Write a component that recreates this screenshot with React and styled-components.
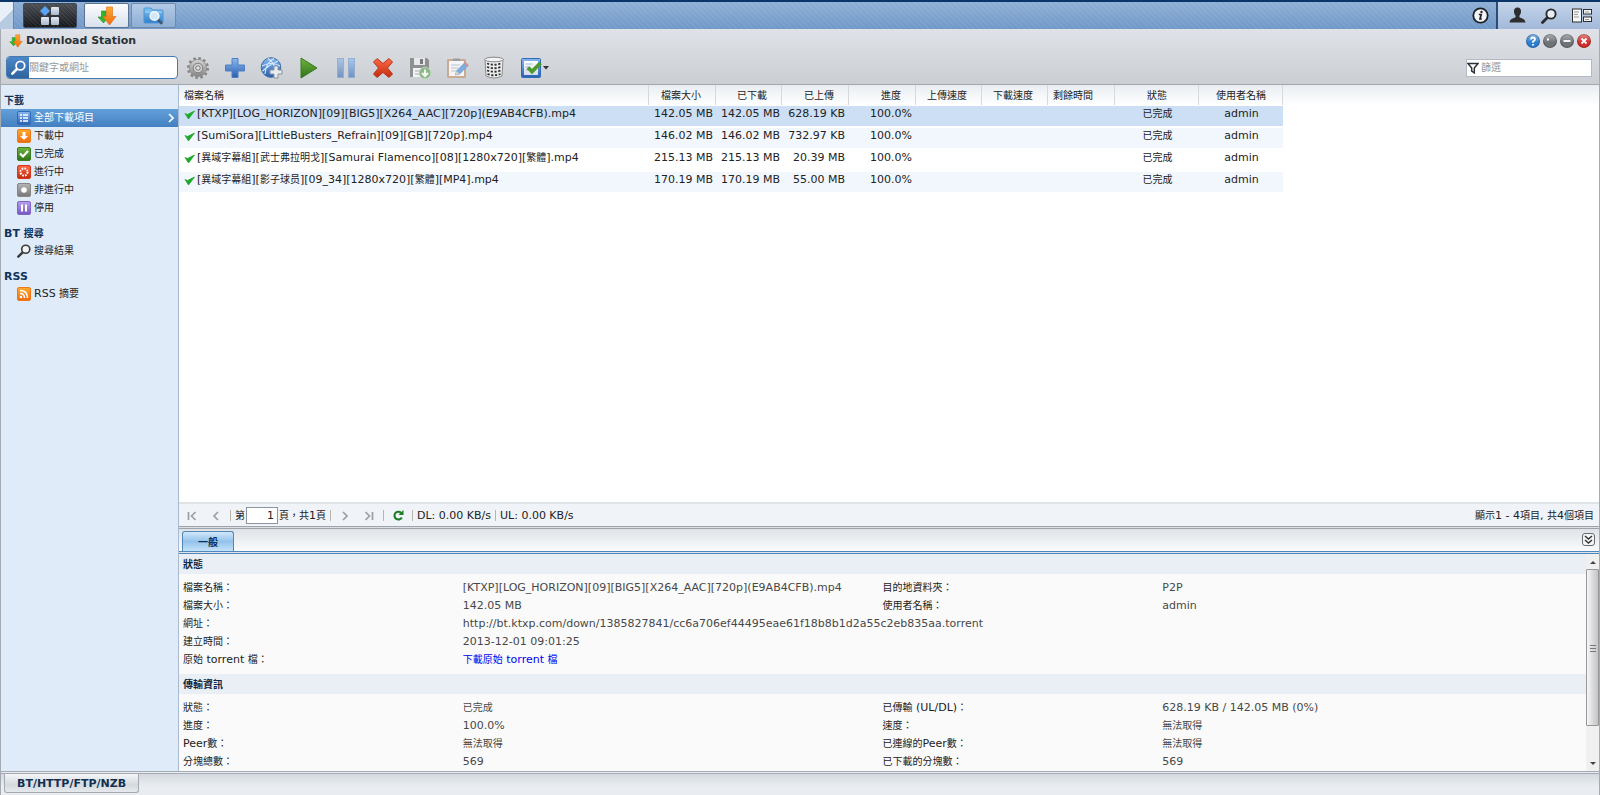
import { useState } from "react";
import styled, { createGlobalStyle, css } from "styled-components";

const CJK = /([\u2e80-\u9fff\uff00-\uffef]+)/;

const Mixed = ({ children }) =>
  String(children)
    .split(CJK)
    .map((part, i) => (i % 2 ? <Han key={i}>{part}</Han> : part));

const columns = [
  { key: "name", title: "檔案名稱", width: 470, align: "left" },
  { key: "size", title: "檔案大小", width: 67, align: "right" },
  { key: "down", title: "已下載", width: 66, align: "right" },
  { key: "up", title: "已上傳", width: 67, align: "right" },
  { key: "progress", title: "進度", width: 67, align: "right" },
  { key: "upSpeed", title: "上傳速度", width: 66, align: "right" },
  { key: "downSpeed", title: "下載速度", width: 66, align: "right" },
  { key: "remain", title: "剩餘時間", width: 67, align: "left" },
  { key: "status", title: "狀態", width: 84, align: "center" },
  { key: "user", title: "使用者名稱", width: 84, align: "center" },
];

const tasks = [
  {
    name: "[KTXP][LOG_HORIZON][09][BIG5][X264_AAC][720p](E9AB4CFB).mp4",
    size: "142.05 MB",
    up: "628.19 KB",
  },
  {
    name: "[SumiSora][LittleBusters_Refrain][09][GB][720p].mp4",
    size: "146.02 MB",
    up: "732.97 KB",
  },
  {
    name: "[異域字幕組][武士弗拉明戈][Samurai Flamenco][08][1280x720][繁體].mp4",
    size: "215.13 MB",
    up: "20.39 MB",
  },
  {
    name: "[異域字幕組][影子球员][09_34][1280x720][繁體][MP4].mp4",
    size: "170.19 MB",
    up: "55.00 MB",
  },
].map((task) => ({
  ...task,
  down: task.size,
  progress: "100.0%",
  status: "已完成",
  user: "admin",
}));

const sections = [
  {
    title: "狀態",
    rows: [
      ["檔案名稱：", tasks[0].name, "目的地資料夾：", "P2P"],
      ["檔案大小：", "142.05 MB", "使用者名稱：", "admin"],
      [
        "網址：",
        "http://bt.ktxp.com/down/1385827841/cc6a706ef44495eae61f18b8b1d2a55c2eb835aa.torrent",
      ],
      ["建立時間：", "2013-12-01 09:01:25"],
      ["原始 torrent 檔：", "下載原始 torrent 檔"],
    ],
  },
  {
    title: "傳輸資訊",
    rows: [
      ["狀態：", "已完成", "已傳輸 (UL/DL)：", "628.19 KB / 142.05 MB (0%)"],
      ["進度：", "100.0%", "速度：", "無法取得"],
      ["Peer數：", "無法取得", "已連線的Peer數：", "無法取得"],
      ["分塊總數：", "569", "已下載的分塊數：", "569"],
    ],
  },
];

/* ---------- icons ---------- */

const Svg = ({ w = 24, h = w, box = `0 0 ${w} ${h}`, children }) => (
  <svg width={w} height={h} viewBox={box} fill="none" aria-hidden="true">
    {children}
  </svg>
);

const Gradients = () => (
  <HiddenSvg aria-hidden="true">
    <defs>
      {[
        ["gBlue", "#8ab8ee", "#2a5fb0"],
        ["gGreen", "#6fb33f", "#2f7418"],
        ["gOrange", "#ffab2e", "#f06a10"],
        ["gRed", "#ff6a45", "#c02a10"],
        ["gGray", "#b5b5b5", "#777777"],
        ["gPurple", "#b5a0ea", "#7657c4"],
        ["gSteel", "#d5d5d5", "#858585"],
        ["gSheet", "#ffffff", "#d3dcea"],
        ["gTile", "#e3eaf4", "#a9b7c9"],
        ["gFolder", "#83c4f3", "#2f7fcb"],
      ].map(([id, from, to]) => (
        <linearGradient key={id} id={id} x1="0" y1="0" x2="0" y2="1">
          <stop offset="0" stopColor={from} />
          <stop offset="1" stopColor={to} />
        </linearGradient>
      ))}
    </defs>
  </HiddenSvg>
);

const ArrowsIcon = ({ size }) => (
  <Svg w={size} box="0 0 20 20">
    <path d="M4.500 5h4.500v6h2.500L6.500 17 1 11h3.500z" fill="#35b52c" stroke="#1f8c1c" strokeWidth="0.600" />
    <path d="M9.500 1h6v9.500h3.500L12.500 19 6 10.500h3.500z" fill="url(#gOrange)" stroke="#e06a12" strokeWidth="0.600" />
  </Svg>
);

const MenuTilesIcon = () => (
  <Svg w={20}>
    <path d="M5 0l5 5-5 5-5-5z" fill="#5aa3f5" />
    <rect x="11" y="1" width="8" height="8" rx="1" fill="url(#gTile)" />
    <rect x="1" y="11" width="8" height="8" rx="1" fill="url(#gTile)" />
    <rect x="11" y="11" width="8" height="8" rx="1" fill="url(#gTile)" />
  </Svg>
);

const FolderIcon = () => (
  <Svg w={21} h={20}>
    <path d="M1 3q0-1 1-1h6l2 2h9q1 0 1 1v11q0 1-1 1H2q-1 0-1-1z" fill="url(#gFolder)" stroke="#4f95d2" />
    <path d="M2 6h17" stroke="#a9dbfa" />
    <path d="M14.500 13l4.500 5" stroke="#41556c" strokeWidth="2.400" />
    <circle cx="11.500" cy="10" r="4.300" fill="#cfe8fb" stroke="#f5f9fd" strokeWidth="1.600" />
  </Svg>
);

const InfoIcon = () => (
  <Svg w={17}>
    <circle cx="8.500" cy="8.500" r="7.200" fill="#f3f5f7" stroke="#1c2126" strokeWidth="1.800" />
    <circle cx="9.500" cy="4.900" r="1.200" fill="#1c2126" />
    <path d="M6.800 7.500h2.400L8 12h1.800" stroke="#1c2126" strokeWidth="1.700" />
  </Svg>
);

const UserIcon = () => (
  <Svg w={17}>
    <path d="M8.500 0.500c2.600 0 3.700 1.900 3.500 4.300-.1 1.700-.8 3-1.600 3.900v1.600c1.500 1 5.600 1.200 6 5.200H.6c.4-4 4.500-4.200 6-5.200V8.700C5.800 7.800 5.100 6.500 5 4.800 4.800 2.400 5.900.5 8.500.5z" fill="#2e2e2e" />
  </Svg>
);

const LensIcon = ({ size = 16, color = "#2b2b2b", glass = "#e8edf4" }) => (
  <Svg w={size} box="0 0 16 16">
    <path d="M6.200 9.800L1.500 14.500" stroke={color} strokeWidth="2.800" strokeLinecap="round" />
    <circle cx="10" cy="6" r="4.600" fill={glass} stroke={color} strokeWidth="1.900" />
  </Svg>
);

const WidgetIcon = () => (
  <Svg w={20} h={15}>
    <rect x="0.500" y="1" width="9" height="13" fill="#f4f5f7" stroke="#2e2e2e" />
    <path d="M2 4h5M2 6.500h4M2 9h5" stroke="#999" />
    <rect x="11.500" y="1.500" width="8" height="4.500" fill="#f4f5f7" stroke="#2e2e2e" />
    <rect x="11.500" y="9" width="8" height="4.500" fill="#f4f5f7" stroke="#2e2e2e" />
    <path d="M13 4h4M13 11.500h4" stroke="#999" />
  </Svg>
);

const GearIcon = () => (
  <Svg>
    <circle cx="12" cy="12" r="9.700" stroke="#858585" strokeWidth="2.600" strokeDasharray="2.600 2.480" />
    <circle cx="12" cy="12" r="8.600" fill="url(#gSteel)" stroke="#8a8a8a" strokeWidth="0.800" />
    <circle cx="12" cy="12" r="4.800" fill="#d0d0d0" stroke="#7f7f7f" />
    <circle cx="12" cy="12" r="2.200" fill="#e3e6e9" stroke="#777" />
  </Svg>
);

const PlusIcon = () => (
  <Svg>
    <path d="M9 2.500h6V9h6.500v6H15v6.500H9V15H2.500V9H9z" fill="url(#gBlue)" stroke="#4d80c4" />
  </Svg>
);

const GlobeIcon = () => (
  <Svg>
    <circle cx="11" cy="11.500" r="9.800" fill="url(#gBlue)" stroke="#3e6ba5" />
    <path d="M2 10q9-5 18 0M5 18Q6 6 14 2.500M8 2.500q8 5 8 17M2.500 15Q9 9 18 5" stroke="#d5ebff" strokeWidth="1.100" />
    <path d="M14 10h4v4h4v4h-4v4h-4v-4h-4v-4h4z" fill="#e9ecef" stroke="#8a949e" />
  </Svg>
);

const PlayIcon = () => (
  <Svg>
    <path d="M4 2l16 10L4 22z" fill="url(#gGreen)" stroke="#3a7b20" />
  </Svg>
);

const PauseIcon = () => (
  <Svg>
    <g fill="url(#gBlue)" stroke="#5f92d4" opacity="0.550">
      <rect x="3.500" y="2.500" width="6" height="19" />
      <rect x="14.500" y="2.500" width="6" height="19" />
    </g>
  </Svg>
);

const DeleteIcon = () => (
  <Svg>
    <path d="M6 2.500l6 5 6-5 3.500 3.500-5 6 5 6-3.500 3.500-6-5-6 5L2.500 18l5-6-5-6z" fill="url(#gRed)" stroke="#b8371c" />
  </Svg>
);

const SaveIcon = () => (
  <Svg>
    <path d="M2 2h17l2 2v17H2z" fill="#8f9092" />
    <rect x="6" y="2" width="11" height="7" fill="#e6e8ea" />
    <rect x="12" y="3" width="3" height="5" fill="#77797b" />
    <rect x="5" y="12" width="13" height="9" fill="#f2f3f4" />
    <path d="M7 15h8M7 18h6" stroke="#aaa" />
    <circle cx="17" cy="17" r="5.800" fill="#8fb58a" stroke="#b9d6b5" />
    <path d="M17 13.500v6M14 17l3 3 3-3" stroke="#f4fbf3" strokeWidth="2" />
  </Svg>
);

const EditIcon = () => (
  <Svg>
    <rect x="2" y="3" width="19" height="19" rx="1" fill="#c9ab94" />
    <rect x="4" y="5" width="15" height="15" fill="#f3f5f8" />
    <path d="M8 5V2.500h7V5z" fill="#9b9fa4" />
    <path d="M6 9h9M6 12h7M6 15h5" stroke="#bac2cc" />
    <path d="M10.500 19l1-4 8.500-8.500 3 3L14.500 18z" fill="#7daee2" stroke="#5f8fc4" strokeWidth="0.700" />
    <path d="M19 7.500l1.500-1.500 3 3-1.500 1.500z" fill="#e58d85" />
    <path d="M10.500 19l1-4 3 3z" fill="#e4d3bd" />
  </Svg>
);

const BinIcon = () => (
  <Svg>
    <path d="M3 3.500h18L20 20q-8 4-16 0z" fill="#eceded" stroke="#8b8b8b" />
    <path d="M5 7.500q7 2.500 14 0M5 11q7 2.500 14 0M5 14.500q7 2.500 14 0M5.500 18q6.500 2.500 13 0" stroke="#2d2d2d" strokeWidth="1.800" strokeDasharray="2.200 1.600" />
    <ellipse cx="12" cy="3.500" rx="9.300" ry="2.300" fill="#f3f4f5" stroke="#858585" />
  </Svg>
);

const SelectIcon = () => (
  <Svg>
    <rect x="2.500" y="2.500" width="19" height="19" rx="1" fill="url(#gBlue)" stroke="#2f6cb8" />
    <rect x="5" y="5" width="14" height="14" fill="url(#gSheet)" />
    <path d="M6.500 8h7M6.500 11h4M6.500 14h3" stroke="#9db6d2" />
    <path d="M9 11.500l4 4 8.500-8.500" stroke="#4d9a2c" strokeWidth="3.800" />
  </Svg>
);

const NavTile = ({ fill, stroke, children }) => (
  <Svg w={14}>
    <rect x="0.500" y="0.500" width="13" height="13" rx="1.500" fill={`url(#${fill})`} stroke={stroke} />
    {children}
  </Svg>
);

const navIcons = {
  all: (
    <NavTile fill="gBlue" stroke="#2f6ab8">
      <path d="M3 4h2M3 7h2M3 10h2M6 4h5M6 7h5M6 10h5" stroke="#fff" strokeWidth="1.300" />
    </NavTile>
  ),
  downloading: (
    <NavTile fill="gOrange" stroke="#ea7c1c">
      <path d="M5.500 3h3v4H11l-4 4-4-4h2.500z" fill="#fff" />
    </NavTile>
  ),
  done: (
    <NavTile fill="gGreen" stroke="#3a7d25">
      <path d="M3 6.500l3 3L11 4" stroke="#fff" strokeWidth="2.200" />
    </NavTile>
  ),
  active: (
    <NavTile fill="gRed" stroke="#d4371d">
      <circle cx="7" cy="7" r="3.600" stroke="#fff" strokeWidth="1.900" strokeDasharray="1.700 1.120" />
    </NavTile>
  ),
  inactive: (
    <NavTile fill="gGray" stroke="#858585">
      <circle cx="7" cy="7" r="2.800" fill="#fff" />
    </NavTile>
  ),
  stopped: (
    <NavTile fill="gPurple" stroke="#7f64c6">
      <path d="M5 3.500v7M9 3.500v7" stroke="#fff" strokeWidth="2" />
    </NavTile>
  ),
  search: <LensIcon size={14} color="#3c3c3c" glass="#f1f2f3" />,
  rss: (
    <NavTile fill="gOrange" stroke="#ea7c1c">
      <circle cx="4" cy="10" r="1.300" fill="#fff" />
      <path d="M3 6.500q4.500 0 4.500 4.500M3 3.500q7.500 0 7.500 7.500" stroke="#fff" strokeWidth="1.500" />
    </NavTile>
  ),
};

const TickIcon = () => (
  <Svg w={12} h={10}>
    <path d="M1 3.500l2.500 1L10.500 1 4.500 9z" fill="#1ea82a" stroke="#1ea82a" strokeWidth="0.800" />
  </Svg>
);

const FilterIcon = () => (
  <Svg w={12}>
    <path d="M1 1.500h10L7.300 6v4.800L4.700 9V6z" stroke="#2e3338" strokeWidth="1.500" />
  </Svg>
);

const pageIcons = {
  first: "M1.500 1v8M8.500 1l-4 4 4 4",
  prev: "M7 1L3 5l4 4",
  next: "M3 1l4 4-4 4",
  last: "M1.500 1l4 4-4 4M8.500 1v8",
};

const controlIcons = [
  {
    label: "說明",
    color: "#2f7fd0",
    path: "M5 5.500Q5 3.500 7 3.500t2 1.800Q9 6.500 7 7.500v1.300M7 10v1.500",
  },
  { label: "最小化", color: "#6e7377", path: "M4 5.500h2" },
  { label: "還原", color: "#6e7377", path: "M3.500 7h7" },
  { label: "關閉", color: "#cf2f2b", path: "M4.500 4.500l5 5M9.500 4.500l-5 5" },
];

const tools = [
  ["設定", <GearIcon />],
  ["新增", <PlusIcon />],
  ["新增網址", <GlobeIcon />],
  ["開始", <PlayIcon />],
  ["暫停", <PauseIcon />],
  ["刪除", <DeleteIcon />],
  ["儲存", <SaveIcon />],
  ["編輯", <EditIcon />],
  ["清除", <BinIcon />],
];

const nav = [
  {
    title: "下載",
    items: [
      ["all", "全部下載項目"],
      ["downloading", "下載中"],
      ["done", "已完成"],
      ["active", "進行中"],
      ["inactive", "非進行中"],
      ["stopped", "停用"],
    ],
  },
  { title: "BT 搜尋", items: [["search", "搜尋結果"]] },
  { title: "RSS", items: [["rss", "RSS 摘要"]] },
];

/* ---------- parts ---------- */

const PageButton = ({ kind, label }) => (
  <PagerButton aria-label={label} disabled>
    <Svg w={10}>
      <path d={pageIcons[kind]} stroke="#9a9fa5" strokeWidth="1.700" />
    </Svg>
  </PagerButton>
);

const Sidebar = ({ current, onSelect }) => (
  <Side>
    {nav.map(({ title, items }) => (
      <NavGroup key={title}>
        <NavTitle>
          <Mixed>{title}</Mixed>
        </NavTitle>
        {items.map(([id, label]) => (
          <NavItem key={id} $active={id === current} onClick={() => onSelect(id)}>
            {navIcons[id]}
            <NavLabel>
              <Mixed>{label}</Mixed>
            </NavLabel>
            {id === current && (
              <Svg w={6} h={10}>
                <path d="M1 1l4 4-4 4" stroke="#fff" strokeWidth="1.600" />
              </Svg>
            )}
          </NavItem>
        ))}
      </NavGroup>
    ))}
  </Side>
);

const TaskTable = ({ selected, onSelect }) => (
  <ListArea>
    <Table>
      <colgroup>
        {columns.map(({ key, width }) => (
          <Col key={key} $width={width} />
        ))}
      </colgroup>
      <thead>
        <tr>
          {columns.map(({ key, title, align }) => (
            <Th key={key} $align={align}>
              <Mixed>{title}</Mixed>
            </Th>
          ))}
        </tr>
      </thead>
      <tbody>
        {tasks.map((task, i) => (
          <Tr key={task.name} $selected={i === selected} onClick={() => onSelect(i)}>
            {columns.map(({ key, align }) => (
              <Td key={key} $align={align}>
                {key === "name" && <TickIcon />}
                <Mixed>{task[key] || ""}</Mixed>
              </Td>
            ))}
          </Tr>
        ))}
      </tbody>
    </Table>
  </ListArea>
);

const Details = () => (
  <DetailArea>
    <DetailBody>
      {sections.map(({ title, rows }) => (
        <section key={title}>
          <SectionTitle>
            <Mixed>{title}</Mixed>
          </SectionTitle>
          <SectionRows>
            {rows.map(([label, value, label2, value2]) => (
              <DetailRow key={label}>
                <dt>
                  <Mixed>{label}</Mixed>
                </dt>
                <dd>
                  {value.startsWith("下載原始") ? (
                    <TorrentLink href="#torrent">
                      <Mixed>{value}</Mixed>
                    </TorrentLink>
                  ) : (
                    <Mixed>{value}</Mixed>
                  )}
                </dd>
                {label2 && (
                  <>
                    <dt>
                      <Mixed>{label2}</Mixed>
                    </dt>
                    <dd>
                      <Mixed>{value2}</Mixed>
                    </dd>
                  </>
                )}
              </DetailRow>
            ))}
          </SectionRows>
        </section>
      ))}
    </DetailBody>
    <ScrollBar>
      <ScrollArrow aria-label="向上">
        <Svg w={6} h={4}>
          <path d="M0 4l3-3 3 3z" fill="#444" />
        </Svg>
      </ScrollArrow>
      <ScrollTrack>
        <ScrollThumb>
          <Svg w={6} h={8}>
            <path d="M0 1.500h6M0 4.500h6M0 7.500h6" stroke="#777" />
          </Svg>
        </ScrollThumb>
      </ScrollTrack>
      <ScrollArrow aria-label="向下">
        <Svg w={6} h={4}>
          <path d="M0 0l3 3 3-3z" fill="#444" />
        </Svg>
      </ScrollArrow>
    </ScrollBar>
  </DetailArea>
);

const App = () => {
  const [current, setCurrent] = useState("all");
  const [selected, setSelected] = useState(0);

  return (
    <>
      <GlobalStyle />
      <Gradients />
      <Desktop>
        <TaskBar>
          <ShowDesktop aria-label="顯示桌面" />
          <MainMenu aria-label="主選單">
            <MenuTilesIcon />
          </MainMenu>
          <TaskButton aria-label="Download Station" $active>
            <ArrowsIcon size={20} />
          </TaskButton>
          <TaskButton aria-label="File Station">
            <FolderIcon />
          </TaskButton>
          <InfoButton aria-label="資訊">
            <InfoIcon />
          </InfoButton>
          <Tray>
            <IconButton aria-label="使用者">
              <UserIcon />
            </IconButton>
            <IconButton aria-label="搜尋">
              <LensIcon />
            </IconButton>
            <IconButton aria-label="小工具">
              <WidgetIcon />
            </IconButton>
          </Tray>
        </TaskBar>

        <Window>
          <WindowHead>
            <TitleBar>
              <ArrowsIcon size={14} />
              <Title>Download Station</Title>
              {controlIcons.map(({ label, color, path }) => (
                <Control key={label} aria-label={label} $color={color}>
                  <Svg w={14}>
                    <path d={path} stroke="#fff" strokeWidth="1.800" />
                  </Svg>
                </Control>
              ))}
            </TitleBar>
            <ToolBar>
              <SearchBox>
                <SearchButton aria-label="搜尋">
                  <LensIcon size={15} color="#fff" glass="#3f78b8" />
                </SearchButton>
                <SearchInput aria-label="關鍵字或網址" placeholder="關鍵字或網址" />
              </SearchBox>
              <Tools>
                {tools.map(([label, icon]) => (
                  <IconButton key={label} aria-label={label}>
                    {icon}
                  </IconButton>
                ))}
                <IconButton aria-label="選擇">
                  <SelectIcon />
                  <Svg w={6} h={4}>
                    <path d="M0 0h6L3 3.500z" fill="#333" />
                  </Svg>
                </IconButton>
              </Tools>
              <FilterBox>
                <FilterIcon />
                <FilterInput aria-label="篩選" placeholder="篩選" />
              </FilterBox>
            </ToolBar>
          </WindowHead>

          <Content>
            <Sidebar current={current} onSelect={setCurrent} />
            <Main>
              <TaskTable selected={selected} onSelect={setSelected} />
              <Pager>
                <PageButton kind="first" label="第一頁" />
                <PageButton kind="prev" label="上一頁" />
                <Divider />
                <PageLabel>
                  <Mixed>第</Mixed>
                  <PageInput aria-label="頁碼" defaultValue="1" />
                  <Mixed>頁，共1頁</Mixed>
                </PageLabel>
                <Divider />
                <PageButton kind="next" label="下一頁" />
                <PageButton kind="last" label="最後一頁" />
                <Divider />
                <PagerButton aria-label="重新整理">
                  <Svg w={11}>
                    <path d="M8.800 7.500A3.900 3.900 0 1 1 8 2.700" stroke="#1c7c24" strokeWidth="2.100" />
                    <path d="M10.500 0v5h-5z" fill="#1c7c24" />
                  </Svg>
                </PagerButton>
                <Divider />
                <span>DL: 0.00 KB/s</span>
                <Divider />
                <span>UL: 0.00 KB/s</span>
                <PageTotal>
                  <Mixed>顯示1 - 4項目, 共4個項目</Mixed>
                </PageTotal>
              </Pager>
              <Splitter />
              <TabStrip>
                <Tab>
                  <Mixed>一般</Mixed>
                </Tab>
                <CollapseButton aria-label="收合">
                  <Svg w={9}>
                    <path d="M1 1l3.500 3L8 1M1 5l3.500 3L8 5" stroke="#333" strokeWidth="1.500" />
                  </Svg>
                </CollapseButton>
              </TabStrip>
              <Details />
            </Main>
          </Content>

          <BottomBar>
            <BottomTab>BT/HTTP/FTP/NZB</BottomTab>
          </BottomBar>
        </Window>
      </Desktop>
    </>
  );
};

export default App;

/* ---------- styles ---------- */

const GlobalStyle = createGlobalStyle`
  * {
    box-sizing: border-box;
  }

  body {
    margin: 0;
    color: #222;
    font: 11px/14px "DejaVu Sans", "Noto Sans CJK TC", sans-serif;
  }

  button, input {
    margin: 0;
    padding: 0;
    border: 0;
    background: none;
    color: inherit;
    font: inherit;
  }

  svg {
    display: block;
    flex: none;
  }
`;

const center = css`
  display: flex;
  align-items: center;
  justify-content: center;
`;

const HiddenSvg = styled.svg`
  position: absolute;
  width: 0;
  height: 0;
`;

const Han = styled.span`
  font-size: 10px;
`;

const Desktop = styled.div`
  display: flex;
  flex-direction: column;
  height: 100vh;
  overflow: hidden;
`;

const TaskBar = styled.header`
  display: flex;
  flex: none;
  height: 29px;
  border-top: 2px solid #0b3468;
  background: repeating-linear-gradient(45deg, #ffffff0c 0 2px, transparent 2px 4px),
    linear-gradient(#8fafd5, #6f98c8);
`;

const ShowDesktop = styled.button`
  width: 14px;
  margin-right: 9px;
  border-right: 1px solid #6886ad;
  background: linear-gradient(135deg, #e9eff6 50%, #b6cae2 51%);
`;

const MainMenu = styled.button`
  ${center}
  width: 54px;
  margin: 1px 7px 1px 0;
  border: 1px solid #3c4a5c;
  border-radius: 2px;
  background: repeating-linear-gradient(45deg, #ffffff12 0 1px, transparent 1px 3px),
    linear-gradient(#4a4e54, #16181b);
`;

const TaskButton = styled.button`
  ${center}
  width: 45px;
  margin: 1px 2px 1px 0;
  border: 1px solid ${({ $active }) => ($active ? "#5b7391" : "#7089a8")};
  border-radius: 2px;
  background: ${({ $active }) =>
    $active ? "linear-gradient(#fdfdfe, #d7e0ec)" : "linear-gradient(#b3cae6, #8eaed4)"};
`;

const InfoButton = styled.button`
  ${center}
  width: 32px;
  margin-left: auto;
`;

const Tray = styled.div`
  display: flex;
  align-items: center;
  gap: 15px;
  padding: 0 8px 0 11px;
  border-left: 2px solid #2c4c78;
  background: linear-gradient(#c5d5e9, #a2b9da);
`;

const IconButton = styled.button`
  ${center}
`;

const Window = styled.main`
  display: flex;
  flex: 1;
  flex-direction: column;
  min-height: 0;
  border: 1px solid #a5abb3;
  border-width: 0 1px;
`;

const WindowHead = styled.div`
  flex: none;
  border-bottom: 1px solid #a3a8ad;
  background: linear-gradient(#dfe3e9, #cbcfd3);
`;

const TitleBar = styled.div`
  display: flex;
  align-items: center;
  height: 23px;
  gap: 3px;
  padding: 0 8px 0 8px;
`;

const Title = styled.h1`
  flex: 1;
  margin: 0;
  color: #2b3137;
  font-size: 11px;
`;

const Control = styled.button`
  width: 14px;
  height: 14px;
  border-radius: 50%;
  background: linear-gradient(#ffffff70, transparent 60%) ${({ $color }) => $color};
  box-shadow: inset 0 0 0 1px #00000040;
`;

const ToolBar = styled.div`
  display: flex;
  align-items: center;
  height: 32px;
  padding: 0 7px 1px 5px;
`;

const SearchBox = styled.div`
  display: flex;
  width: 172px;
  height: 23px;
  overflow: hidden;
  border: 1px solid #4679b0;
  border-radius: 4px;
  background: #fff;
`;

const SearchButton = styled.button`
  ${center}
  width: 22px;
  background: linear-gradient(#4b87c8, #2f649f);
`;

const SearchInput = styled.input`
  flex: 1;
  min-width: 0;
  font-size: 10px;

  &::placeholder {
    color: #999;
  }
`;

const Tools = styled.div`
  display: flex;
  flex: 1;
  gap: 13px;
  margin-left: 8px;
`;

const FilterBox = styled.div`
  display: flex;
  align-items: center;
  width: 126px;
  height: 18px;
  gap: 2px;
  border: 1px solid #b4b9c8;
  background: #fff;
`;

const FilterInput = styled(SearchInput)`
  height: 16px;
`;

const Content = styled.div`
  display: flex;
  flex: 1;
  min-height: 0;
`;

const Side = styled.nav`
  flex: none;
  width: 178px;
  padding-top: 7px;
  border-right: 1px solid #a9bad0;
  background: #e0ebf9;
`;

const NavGroup = styled.div`
  margin-bottom: 8px;
`;

const NavTitle = styled.h2`
  margin: 0;
  padding-left: 3px;
  color: #10335b;
  font-size: 11px;
  line-height: 17px;
`;

const NavItem = styled.button`
  display: flex;
  align-items: center;
  gap: 3px;
  width: 100%;
  height: 18px;
  padding: 0 4px 0 16px;
  color: ${({ $active }) => ($active ? "#fff" : "#222")};
  background: ${({ $active }) => ($active ? "linear-gradient(#63a0da, #4480c0)" : "none")};
`;

const NavLabel = styled.span`
  flex: 1;
  text-align: left;
`;

const Main = styled.div`
  display: flex;
  flex: 1;
  flex-direction: column;
  min-width: 0;
`;

const ListArea = styled.div`
  flex: 1;
  min-height: 0;
  overflow: hidden;
  background: linear-gradient(#e9edf2, #fff 20px);
`;

const Table = styled.table`
  table-layout: fixed;
  width: 1104px;
  border-collapse: separate;
  border-spacing: 0;
`;

const Col = styled.col`
  width: ${({ $width }) => $width}px;
`;

const Th = styled.th`
  height: 20px;
  padding: 2px ${({ $align }) => ($align === "right" ? "14px" : "4px")} 0 5px;
  border-right: 1px solid #d5d9de;
  font-weight: normal;
  text-align: ${({ $align }) => $align};
  white-space: nowrap;
`;

const Tr = styled.tr`
  background: ${({ $selected }) => ($selected ? "#cddff4" : "#fff")};

  &:nth-child(even) {
    background: ${({ $selected }) => ($selected ? "#cddff4" : "#f2f7fe")};
  }
`;

const Td = styled.td`
  height: 22px;
  padding: 1px 4px 5px 5px;
  border: 1px solid #fff;
  border-width: 1px 0;
  background-clip: padding-box;
  text-align: ${({ $align }) => $align};
  white-space: nowrap;

  svg {
    display: inline-block;
    margin-right: 1px;
    vertical-align: -3px;
  }
`;

const Pager = styled.div`
  display: flex;
  flex: none;
  align-items: center;
  gap: 4px;
  height: 24px;
  padding: 1px 5px 0 3px;
  border-top: 2px solid #e0e3e6;
  background: #f0f4f9;
`;

const PagerButton = styled.button`
  ${center}
  width: 20px;
  height: 20px;
`;

const Divider = styled.i`
  width: 1px;
  height: 11px;
  background: #b9b5a8;
`;

const PageLabel = styled.label`
  display: flex;
  align-items: center;
  white-space: pre;
`;

const PageInput = styled.input`
  width: 32px;
  height: 17px;
  margin: 0 1px;
  padding-right: 3px;
  border: 1px solid #8e959e;
  background: #fff;
  text-align: right;
`;

const PageTotal = styled.span`
  margin-left: auto;
`;

const Splitter = styled.div`
  flex: none;
  height: 3px;
  border: 1px solid #9ea4ac;
  border-width: 1px 0;
  background: #dce0e5;
`;

const TabStrip = styled.div`
  display: flex;
  flex: none;
  align-items: flex-end;
  justify-content: space-between;
  height: 25px;
  padding: 0 4px 0 3px;
  border-bottom: 3px double #4f86bd;
  background: linear-gradient(#dfe3e8, #fafbfc);
`;

const Tab = styled.button`
  width: 52px;
  height: 20px;
  padding-top: 2px;
  border: 1px solid #5286b5;
  border-bottom: 0;
  border-radius: 3px 3px 0 0;
  background: linear-gradient(#d3e8fa, #92c2eb 50%, #c5e2fa);
  color: #0e2f52;
  font-weight: bold;
`;

const CollapseButton = styled.button`
  ${center}
  width: 13px;
  height: 13px;
  margin-bottom: 5px;
  border: 1px solid #666b70;
  border-radius: 3px;
  background: #f5f6f7;
`;

const DetailArea = styled.div`
  display: flex;
  flex: none;
  height: 217px;
  background: #fafafa;
`;

const DetailBody = styled.div`
  flex: 1;
  min-width: 0;
  overflow: hidden;
`;

const SectionTitle = styled.h2`
  height: 20px;
  margin: 0;
  padding: 1px 4px 0;
  background: #e9eff5;
  color: #0e2743;
  font-size: 11px;
  line-height: 20px;
`;

const SectionRows = styled.dl`
  margin: 0;
  padding: 5px 4px;
`;

const DetailRow = styled.div`
  display: grid;
  grid-template-columns: 20% 30% 20% 30%;
  line-height: 18px;
  white-space: nowrap;

  dd {
    margin: 0;
    color: #484848;
  }
`;

const TorrentLink = styled.a`
  color: #0000f0;
  text-decoration: none;
`;

const ScrollBar = styled.div`
  display: flex;
  flex: none;
  flex-direction: column;
  width: 13px;
  background: #f0f0f0;
`;

const ScrollArrow = styled.button`
  ${center}
  height: 15px;
`;

const ScrollTrack = styled.div`
  flex: 1;
`;

const ScrollThumb = styled.div`
  ${center}
  height: 84%;
  border: 1px solid #979797;
  border-radius: 1px;
  background: linear-gradient(90deg, #f7f7f7, #d9d9dc 55%, #c3c4c8);
`;

const BottomBar = styled.footer`
  flex: none;
  height: 24px;
  padding: 0 3px;
  border-top: 3px double #a4aab1;
  background: linear-gradient(#d3d9df, #e9edf1 12px);
`;

const BottomTab = styled.button`
  height: 19px;
  padding: 2px 12px 0 12px;
  border: 1px solid #a4aab1;
  border-top: 0;
  border-radius: 0 0 3px 3px;
  background: linear-gradient(#f4f6f8, #d5dadf 60%, #e6eaee);
  color: #12304f;
  font-weight: bold;
`;
